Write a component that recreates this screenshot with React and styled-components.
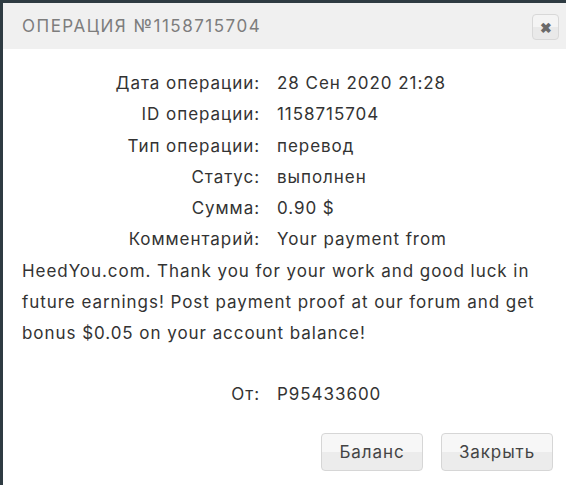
import React from "react";
import styled, { createGlobalStyle } from "styled-components";

const Global = createGlobalStyle`
  html, body { margin: 0; padding: 0; overflow: hidden; }
  body { background: #2e3b42; font-family: Inter, "Open Sans", sans-serif; }
`;

const Page = styled.div`
  padding: 3px 0 0 3px;
  height: 485px;
  box-sizing: border-box;
`;

const Dialog = styled.div`
  width: 570px;
  height: 500px;
  background: #fff;
  border-radius: 3px 0 0 0;
  display: flex;
  flex-direction: column;
`;

const Header = styled.div`
  height: 46px;
  background: #f0f0f0;
  display: flex;
  align-items: center;
  padding: 0 0 0 19px;
  box-sizing: border-box;
  justify-content: space-between;
`;

const Title = styled.div`
  font-size: 17px;
  letter-spacing: 1.5px;
  color: #7d7d7d;
  font-weight: 400;
`;

const CloseBtn = styled.div`
  width: 27px;
  height: 26px;
  margin-right: 14px;
  margin-top: 2px;
  border: 1px solid #d8d8d8;
  border-radius: 4px;
  background: linear-gradient(#f4f4f4 50%, #e9e9e9 50%);
  display: flex;
  align-items: center;
  justify-content: center;
  color: #6a6a6a;
  font-size: 14px;
  font-weight: bold;
  box-sizing: border-box;
`;

const Body = styled.div`
  padding: 19px 30px 0 19px;
  font-size: 17px;
  letter-spacing: 0.95px;
  line-height: 31.3px;
  color: #333;
`;

const Row = styled.div``;

const Label = styled.span`
  display: inline-block;
  width: 238px;
  text-align: right;
  margin-right: 17px;
`;

const Spacer = styled.div`
  height: 29px;
`;

const Footer = styled.div`
  display: flex;
  justify-content: flex-end;
  gap: 18px;
  padding: 23px 20px 0 0;
`;

const Button = styled.button`
  height: 38px;
  width: ${(p) => p.$w}px;
  border: 1px solid #d6d6d6;
  border-radius: 4px;
  background: linear-gradient(#f7f7f7 50%, #ececec 50%);
  font-family: Inter, "Open Sans", sans-serif;
  font-size: 17px;
  letter-spacing: 0.9px;
  color: #444;
`;

export default function App() {
  return (
    <>
      <Global />
      <Page>
        <Dialog>
          <Header>
            <Title>ОПЕРАЦИЯ №1158715704</Title>
            <CloseBtn>✖</CloseBtn>
          </Header>
          <Body>
            <Row><Label>Дата операции:</Label>28 Сен 2020 21:28</Row>
            <Row><Label>ID операции:</Label>1158715704</Row>
            <Row><Label>Тип операции:</Label>перевод</Row>
            <Row><Label>Статус:</Label>выполнен</Row>
            <Row><Label>Сумма:</Label>0.90 $</Row>
            <Row>
              <Label>Комментарий:</Label>Your payment from HeedYou.com. Thank you for your work and good luck in future earnings! Post payment proof at our forum and get bonus $0.05 on your account balance!
            </Row>
            <Spacer />
            <Row><Label>От:</Label>P95433600</Row>
          </Body>
          <Footer>
            <Button $w={102}>Баланс</Button>
            <Button $w={112}>Закрыть</Button>
          </Footer>
        </Dialog>
      </Page>
    </>
  );
}
